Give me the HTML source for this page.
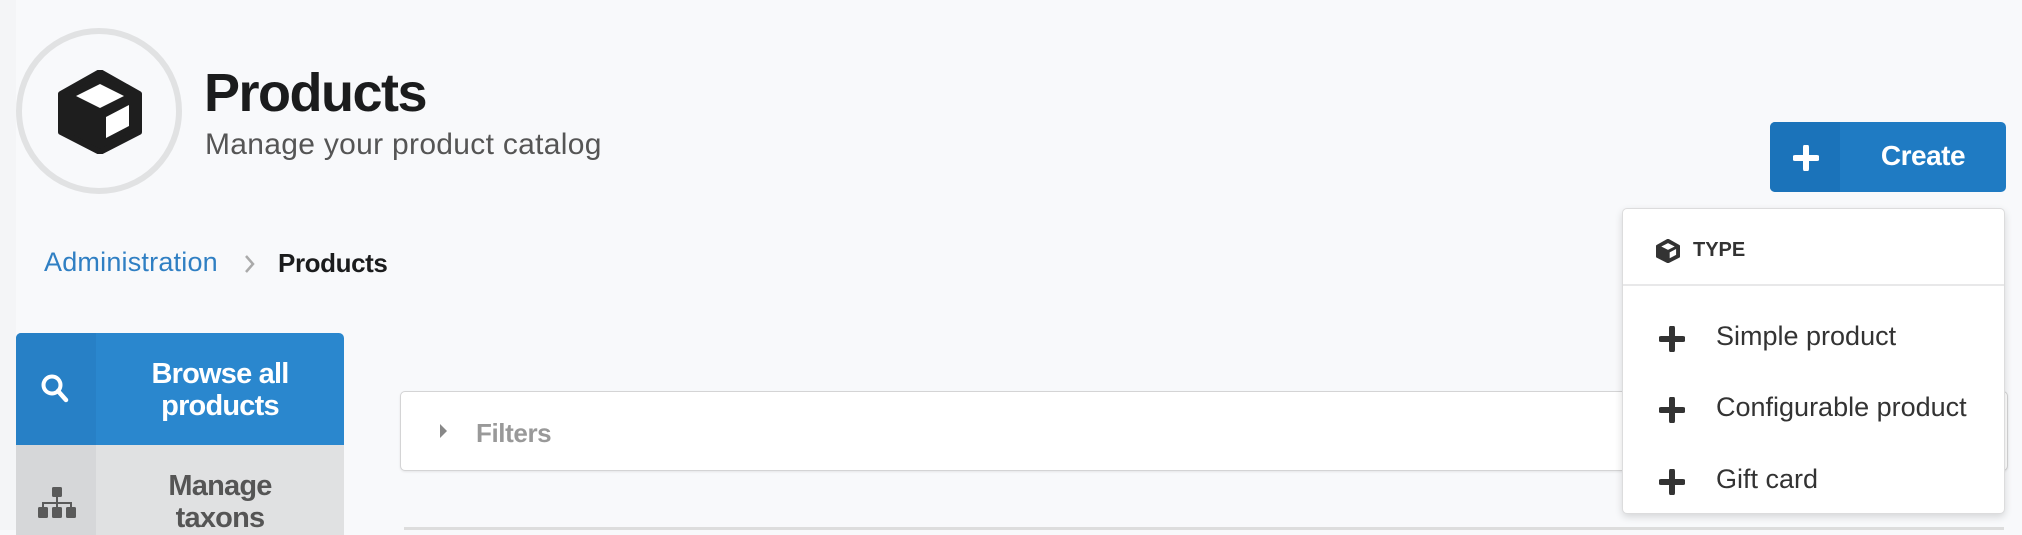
<!DOCTYPE html>
<html><head><style>
*{margin:0;padding:0;box-sizing:border-box}
body{width:2022px;height:530px;overflow:hidden;background:#f8f9fb;font-family:"Liberation Sans",sans-serif;position:relative}
.strip{position:absolute;left:0;top:0;width:16px;height:530px;background:#f4f5f7}
.circle{position:absolute;left:16px;top:28px;width:166px;height:166px;border-radius:50%;border:6px solid #e1e2e3;background:#f8f9fb}
.abs{position:absolute;white-space:nowrap}
</style></head><body>
<div class="strip"></div>
<div class="circle"></div>
<svg class="abs" style="left:57px;top:70px" width="86" height="84" viewBox="0 0 86 84">
<path d="M43 2 L82 24 L82 62 L43 82 L4 62 L4 24 Z" fill="#1e1e1e" stroke="#1e1e1e" stroke-width="6" stroke-linejoin="round"/>
<path d="M43 14 L67 26 L43 38 L19 26 Z" fill="#fff"/>
<path d="M49 47 L72 35 L72 56 L49 68 Z" fill="#fff"/>
</svg>
<div class="abs" style="left:204px;top:62px;font-size:54px;font-weight:bold;color:#1b1c1d;letter-spacing:-1.5px">Products</div>
<div class="abs" style="left:205px;top:128px;font-size:30px;color:#555;letter-spacing:0.3px">Manage your product catalog</div>
<div class="abs" style="left:44px;top:247px;font-size:27px;color:#2f7fc3;letter-spacing:0.2px">Administration</div>
<svg class="abs" style="left:244px;top:254px" width="12" height="20"><path d="M2 2 L9 10 L2 18" fill="none" stroke="#aaa" stroke-width="2.5"/></svg>
<div class="abs" style="left:278px;top:248px;font-size:26px;font-weight:bold;color:#1b1c1d;letter-spacing:-0.4px">Products</div>

<div class="abs" style="left:16px;top:333px;width:328px;height:112px;background:#2a87ce;border-radius:5px 5px 0 0;overflow:hidden">
<div style="position:absolute;left:0;top:0;width:80px;height:112px;background:#2780c6"></div>
<svg style="position:absolute;left:24px;top:40px" width="30" height="32"><circle cx="12" cy="12" r="8.5" fill="none" stroke="#fff" stroke-width="4"/><path d="M18 18 L26 27" stroke="#fff" stroke-width="4.5" stroke-linecap="round"/></svg>
<div style="position:absolute;left:80px;right:0;top:25px;text-align:center;color:#fff;font-weight:bold;font-size:29px;line-height:32px;letter-spacing:-0.8px">Browse all<br>products</div>
</div>
<div class="abs" style="left:16px;top:445px;width:328px;height:90px;background:#e0e1e2;overflow:hidden">
<div style="position:absolute;left:0;top:0;width:80px;height:90px;background:#d6d7d9"></div>
<svg style="position:absolute;left:21px;top:42px" width="40" height="34" fill="#5a5a5a"><rect x="15" y="0" width="10" height="10" rx="1.5"/><rect x="19" y="9" width="2" height="7"/><rect x="5" y="15" width="30" height="2"/><rect x="5" y="15" width="2" height="6"/><rect x="33" y="15" width="2" height="6"/><rect x="19" y="15" width="2" height="6"/><rect x="1" y="20" width="10" height="11" rx="1.5"/><rect x="15" y="20" width="10" height="11" rx="1.5"/><rect x="29" y="20" width="10" height="11" rx="1.5"/></svg>
<div style="position:absolute;left:80px;right:0;top:25px;text-align:center;color:#555;font-weight:bold;font-size:29px;line-height:32px;letter-spacing:-0.8px">Manage<br>taxons</div>
</div>

<div class="abs" style="left:400px;top:391px;width:1608px;height:80px;background:#fff;border:1px solid #d4d4d5;border-radius:5px;box-shadow:0 1px 2px rgba(0,0,0,.08)"></div>
<svg class="abs" style="left:439px;top:423px" width="10" height="16"><path d="M1 1 L8 8 L1 15 Z" fill="#888"/></svg>
<div class="abs" style="left:476px;top:418px;font-size:26px;font-weight:bold;color:#999;letter-spacing:-0.4px">Filters</div>
<div class="abs" style="left:404px;top:527px;width:1600px;height:3px;background:#ddd"></div>

<div class="abs" style="left:1770px;top:122px;width:236px;height:70px;background:#1f7bc3;border-radius:5px;overflow:hidden">
<div style="position:absolute;left:0;top:0;width:70px;height:70px;background:#1b73ba"></div>
<svg style="position:absolute;left:23px;top:23px" width="26" height="26"><path d="M13 2 V24 M2 13 H24" stroke="#fff" stroke-width="6" stroke-linecap="round"/></svg>
<div style="position:absolute;left:70px;right:0;top:18px;text-align:center;color:#fff;font-weight:bold;font-size:28px;letter-spacing:-0.5px">Create</div>
</div>

<div class="abs" style="left:1622px;top:208px;width:383px;height:306px;background:#fff;border:1px solid #dcdcdd;border-radius:5px;box-shadow:0 3px 8px rgba(0,0,0,.14)">
<div style="position:absolute;left:0;right:0;top:75px;height:2px;background:#e8e8e9"></div>
<svg style="position:absolute;left:33px;top:30px" width="24" height="24" viewBox="0 0 86 84"><path d="M43 2 L82 24 L82 62 L43 82 L4 62 L4 24 Z" fill="#333" stroke="#333" stroke-width="8" stroke-linejoin="round"/><path d="M43 14 L67 26 L43 38 L19 26 Z" fill="#fff"/><path d="M49 47 L72 35 L72 56 L49 68 Z" fill="#fff"/></svg>
<div style="position:absolute;left:70px;top:30px;font-size:20px;font-weight:bold;color:#333">TYPE</div>
<svg style="position:absolute;left:36px;top:117px" width="26" height="26"><path d="M13 2 V24 M2 13 H24" stroke="#333" stroke-width="6" stroke-linecap="round"/></svg>
<div style="position:absolute;left:93px;top:112px;font-size:27px;color:#333">Simple product</div>
<svg style="position:absolute;left:36px;top:188px" width="26" height="26"><path d="M13 2 V24 M2 13 H24" stroke="#333" stroke-width="6" stroke-linecap="round"/></svg>
<div style="position:absolute;left:93px;top:183px;font-size:27px;color:#333">Configurable product</div>
<svg style="position:absolute;left:36px;top:260px" width="26" height="26"><path d="M13 2 V24 M2 13 H24" stroke="#333" stroke-width="6" stroke-linecap="round"/></svg>
<div style="position:absolute;left:93px;top:255px;font-size:27px;color:#333">Gift card</div>
</div>
</body></html>
